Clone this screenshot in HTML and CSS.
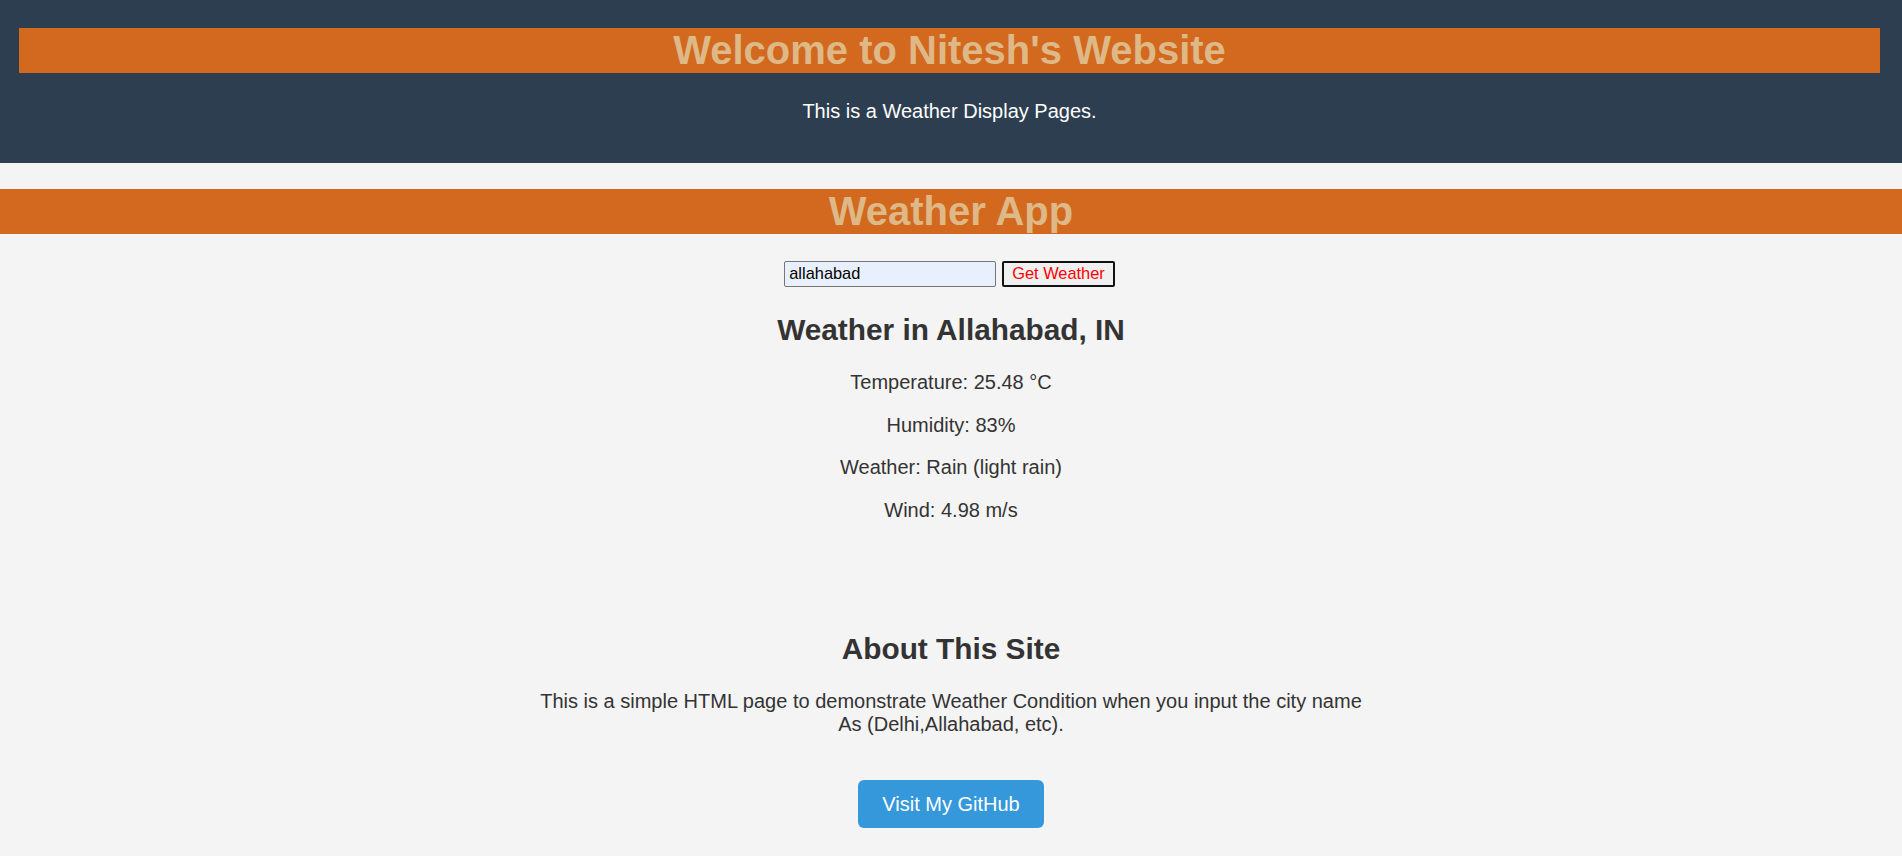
FILE: index.html
```html
<!DOCTYPE html>
<html lang="en">
<head>
<meta charset="utf-8">
<title>Nitesh's Website - Weather</title>
<link rel="stylesheet" href="styles.css">
</head>
<body>
<header class="site-header">
  <h1 class="banner">Welcome to Nitesh's Website</h1>
  <p class="tagline">This is a Weather Display Pages.</p>
</header>
<main>
  <section class="weather">
    <h2 class="app-title">Weather App</h2>
    <div class="search">
      <input class="city-input" type="text" value="allahabad">
      <button class="fetch-btn" type="button">Get Weather</button>
    </div>
    <div class="result">
      <h2 class="section-title result-title">Weather in Allahabad, IN</h2>
      <p class="reading">Temperature: 25.48 °C</p>
      <p class="reading">Humidity: 83%</p>
      <p class="reading">Weather: Rain (light rain)</p>
      <p class="reading">Wind: 4.98 m/s</p>
    </div>
  </section>
  <section class="about">
    <h2 class="section-title">About This Site</h2>
    <p class="about-text">This is a simple HTML page to demonstrate Weather Condition when you input the city name As (Delhi,Allahabad, etc).</p>
    <div class="actions">
      <a class="github-btn" href="#">Visit My GitHub</a>
    </div>
  </section>
</main>
</body>
</html>
```

FILE: styles.css
```css
html, body {
  margin: 0;
  padding: 0;
}

body {
  background: #f4f4f4;
  color: #333333;
  font-family: "Liberation Sans", Arial, sans-serif;
  font-size: 20px;
  text-align: center;
}

.site-header {
  background: #2c3e50;
  color: #ffffff;
  padding: 28px 22px 41px 19px;
}

.banner {
  margin: 0;
  background: #d2691e;
  color: #deb887;
  font-size: 40px;
  font-weight: bold;
  line-height: 45px;
}

.tagline {
  margin: 26.5px 0 0;
  line-height: 22.3px;
}

.app-title {
  margin: 26px 0 0;
  background: #d2691e;
  color: #deb887;
  font-size: 40px;
  font-weight: bold;
  line-height: 45px;
}

.search {
  display: flex;
  justify-content: center;
  align-items: center;
  gap: 6px;
  margin-top: 27px;
  padding-right: 3px;
}

.city-input {
  box-sizing: border-box;
  width: 212px;
  height: 26px;
  margin: 0;
  padding: 1px 4px;
  border: 1px solid #767676;
  border-radius: 2px;
  background: #e8f0fe;
  color: #000000;
  font-family: "Liberation Sans", Arial, sans-serif;
  font-size: 16.4px;
}

.fetch-btn {
  box-sizing: border-box;
  width: 112.5px;
  height: 25.5px;
  margin: 0;
  padding: 0 5px;
  border: 2px solid #111111;
  border-radius: 2px;
  background: #f0f0f0;
  color: #ff0000;
  font-family: "Liberation Sans", Arial, sans-serif;
  font-size: 16.4px;
}

.result {
  padding-bottom: 65.8px;
}

.section-title {
  margin: 24.2px 0;
  font-size: 29.8px;
  font-weight: bold;
  line-height: 33.5px;
  color: #333333;
}

.result-title {
  margin-top: 26.6px;
}

.reading {
  margin: 20.4px 0;
  line-height: 22.3px;
}

.about-text {
  max-width: 828px;
  margin: 24.2px auto 19.4px;
  line-height: 23.5px;
}

.actions {
  display: flex;
  justify-content: center;
  padding-top: 24.5px;
}

.github-btn {
  display: block;
  padding: 12.9px 24.3px;
  border-radius: 6px;
  background: #3498db;
  color: #ffffff;
  text-decoration: none;
  line-height: 22.3px;
}
```
